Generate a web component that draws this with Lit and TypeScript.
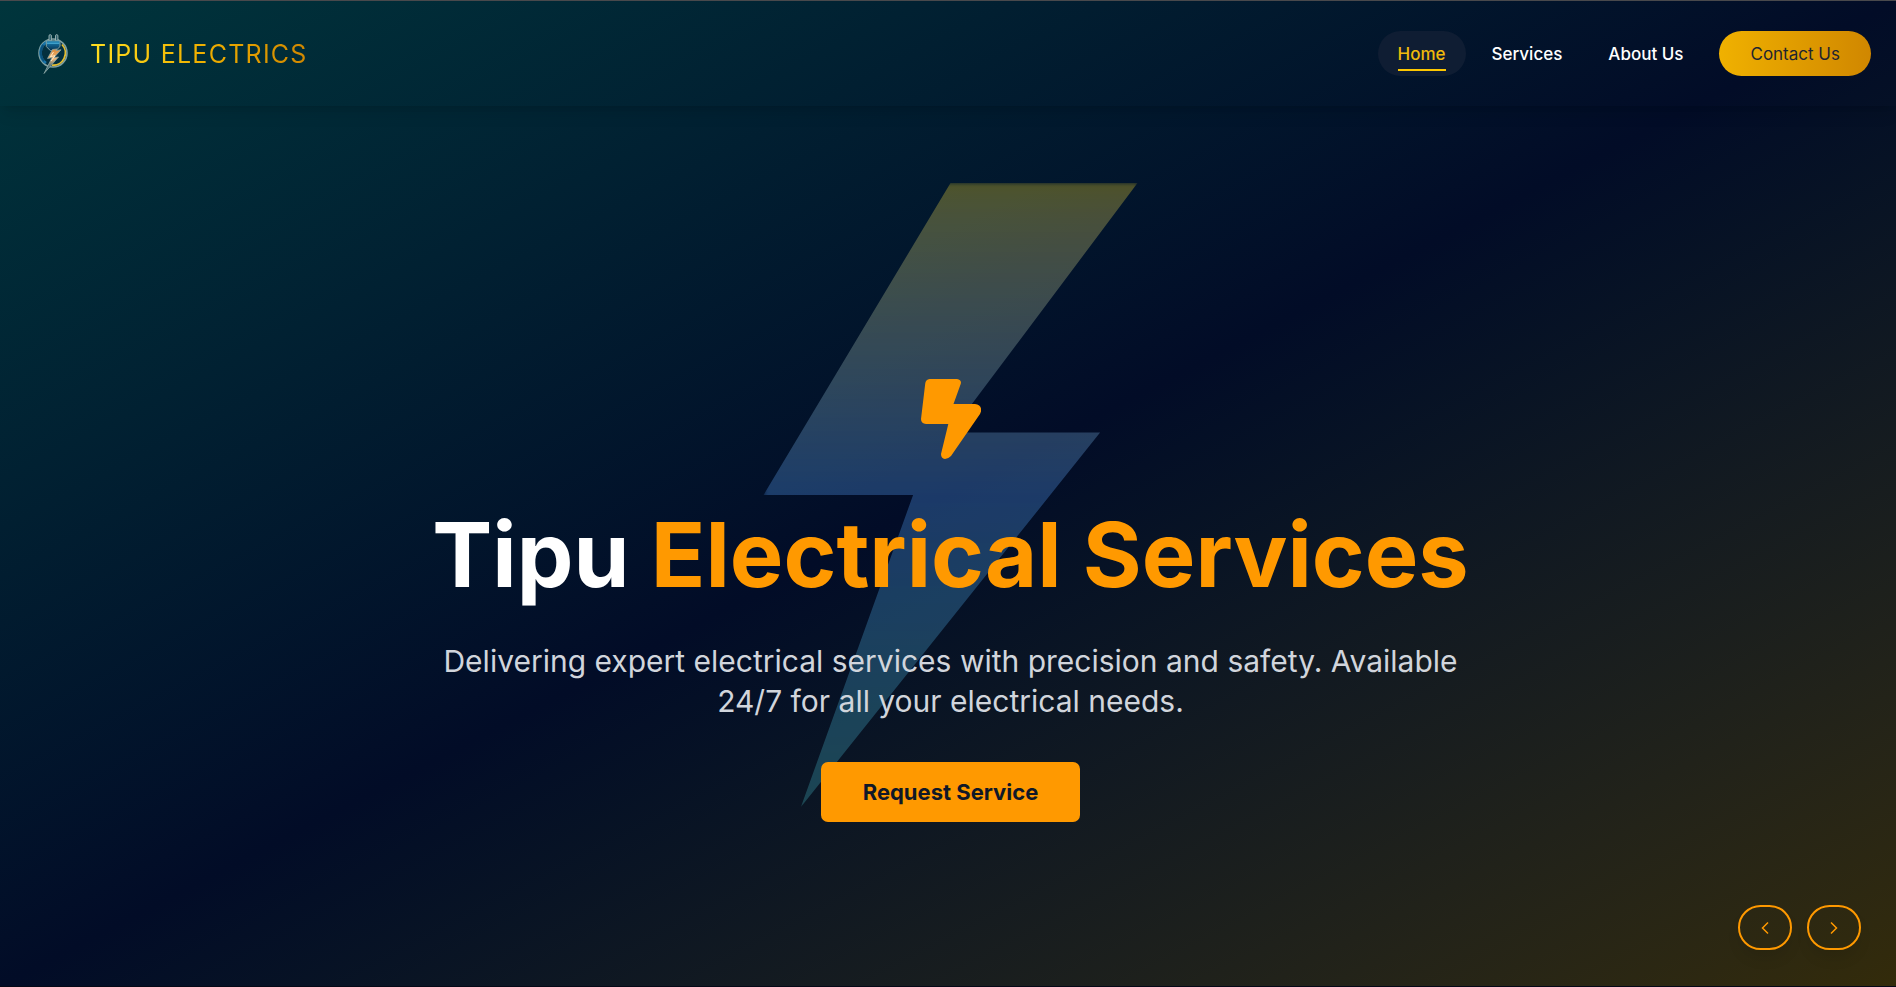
import { LitElement, html, css, svg } from "lit";
import { customElement, state } from "lit/decorators.js";

const links = ["Home", "Services", "About Us"];

const logo = svg`
  <svg class="logo" viewBox="0 0 32 40" aria-hidden="true">
    <defs>
      <linearGradient id="plug" x1="0" y1="0" x2="0" y2="1">
        <stop offset="0" stop-color="#1681b8" /><stop offset="1" stop-color="#082f4c" />
      </linearGradient>
      <linearGradient id="spark" x1="0" y1="0" x2="0" y2="1">
        <stop offset="0" stop-color="#d98a3a" /><stop offset=".4" stop-color="#f3b877" /><stop offset=".7" stop-color="#4c7076" />
      </linearGradient>
    </defs>
    <circle cx="16" cy="19" r="14" fill="#04303f" stroke="#7fa0a2" stroke-width="1.6" />
    <path d="M11 7.500A12.300 12.300 0 0 0 9 29" fill="none" stroke="#1673a8" stroke-width="2.600" />
    <path d="M6.500 11A12.300 12.300 0 0 0 7 27" fill="none" stroke="#0c5078" stroke-width="2" />
    <path d="M25 10.500A12.300 12.300 0 0 1 15 31.200" fill="none" stroke="#e3bd31" stroke-width="1.800" />
    <path d="M12 7V1.300q1.200-1.400 2.400 0V7zM18.500 7V1.300q1.200-1.400 2.400 0V7z" fill="#2b5f6c" stroke="#9fb7b5" stroke-width=".9" />
    <path d="M9.300 6.800H23v5.700l-4.200 4.200h-5.400l-4.100-4.200z" fill="url(#plug)" stroke="#7fa0a2" stroke-width="1" />
    <path d="M10 9.200h12.300" stroke="#55b9de" stroke-width="1" />
    <path d="M15.500 15.500L10.500 24.500l4.500-.8L7 39.500 21.500 23l-4.500 .6 7-7.800-5 .7 1-1.500z" fill="url(#spark)" stroke="#8ca7a6" stroke-width=".8" />
    <path d="M16.500 18l-3 4.500 4.500-.8L14 27" fill="none" stroke="#fff0d5" stroke-width=".9" />
  </svg>`;

@customElement("app-root")
export class AppRoot extends LitElement {
  @state() private active = "Home";

  static styles = css`
    :host {
      display: block;
      font-family: Inter, sans-serif;
      color: #fff;
    }
    * {
      box-sizing: border-box;
    }
    .page {
      display: flex;
      flex-direction: column;
      min-height: 100vh;
      border-top: 1px solid #4a4a4d;
      border-bottom: 1px solid #050817;
      background: linear-gradient(to bottom right in oklab, #00353c, #020c27 50%, #332b0a);
    }
    .header {
      display: flex;
      align-items: center;
      justify-content: space-between;
      padding: 30px 25px 30px 37px;
      box-shadow: 0 10px 15px -3px rgb(0 0 0 / 10%), 0 4px 6px -4px rgb(0 0 0 / 10%);
    }
    .brand {
      display: flex;
      align-items: center;
      gap: 21px;
      text-decoration: none;
    }
    .logo {
      width: 32px;
      height: 40px;
    }
    .name {
      font-size: 25px;
      line-height: 32px;
      letter-spacing: 0.05em;
      color: transparent;
      background: linear-gradient(to right, #ffdf20, #f0b100, #d08700);
      background-clip: text;
      -webkit-background-clip: text;
    }
    .nav {
      display: flex;
      align-items: center;
      gap: 6px;
    }
    .link {
      display: flex;
      height: 45px;
      padding: 8px 20px 0;
      border-radius: 23px;
      color: #fff;
      font-size: 17px;
      font-weight: 500;
      line-height: 30px;
      text-decoration: none;
    }
    .label {
      height: 32px;
      border-bottom: 2px solid transparent;
    }
    .link.active {
      background: #0f1d33;
      color: #f0b90b;
    }
    .active .label {
      border-color: #fdc700;
    }
    .contact {
      height: 45px;
      margin-left: 10px;
      padding: 0 31px;
      border: 0;
      border-radius: 23px;
      background: linear-gradient(to right, #f0b100, #d08700);
      color: #1e2430;
      font: 400 17px/24px Inter, sans-serif;
    }
    .hero {
      flex: 1;
      display: grid;
      grid-template: 1fr / 1fr;
      padding-left: 5px;
    }
    .bolt,
    .content,
    .arrows {
      grid-area: 1 / 1;
    }
    .bolt {
      justify-self: center;
      margin-top: 77px;
      width: 374px;
      height: 624px;
      clip-path: polygon(50% 0, 100% 0, 50% 40%, 90% 40%, 10% 100%, 40% 50%, 0 50%);
      background: linear-gradient(to bottom in oklab, #ffdf20, #58a4ff, #46b8c0);
      filter: blur(2px);
      opacity: 0.3;
    }
    .content {
      z-index: 1;
      display: flex;
      flex-direction: column;
      align-items: center;
      padding-top: 273px;
      text-align: center;
    }
    .flash {
      width: 60px;
      height: 80px;
      fill: #ff9900;
    }
    .title {
      margin: 41px 0 0;
      font-size: 90px;
      font-weight: 700;
      line-height: 110px;
    }
    .accent {
      color: #ff9900;
    }
    .text {
      max-width: 1036px;
      margin: 31px 0 0;
      color: #d1d5dc;
      font-size: 30px;
      line-height: 40px;
    }
    .request {
      height: 60px;
      margin-top: 41px;
      padding: 0 42px;
      border: 0;
      border-radius: 7px;
      background: #ff9900;
      color: #101828;
      font: 700 22px/30px Inter, sans-serif;
    }
    .arrows {
      z-index: 2;
      align-self: end;
      justify-self: end;
      display: flex;
      gap: 15px;
      padding: 0 35px 36px 0;
    }
    .arrow {
      display: grid;
      place-items: center;
      width: 54px;
      height: 45px;
      padding: 0;
      border: 2px solid #ff9900;
      border-radius: 23px;
      background: transparent;
      color: #ff9900;
      box-shadow: 0 10px 15px -3px rgb(0 0 0 / 10%);
    }
    .chevron {
      width: 8px;
      height: 14px;
      fill: none;
      stroke: currentColor;
      stroke-width: 1.5;
    }
  `;

  render() {
    return html`
      <div class="page">
        <header class="header">
          <a class="brand" href="#home">${logo}<span class="name">TIPU ELECTRICS</span></a>
          <nav class="nav" aria-label="Main">
            ${links.map(
              (name) => html`<a
                class="link ${name === this.active ? "active" : ""}"
                href="#${name.toLowerCase().replace(" ", "-")}"
                @click=${() => (this.active = name)}
                ><span class="label">${name}</span></a
              >`
            )}
            <button class="contact" type="button">Contact Us</button>
          </nav>
        </header>
        <main class="hero">
          <div class="bolt"></div>
          <section class="content">
            <svg class="flash" viewBox="0 0 60 80" aria-hidden="true">
              <path d="M8.500 0H36q5 1 3.700 5L32.500 25H54q7 1 6 7.500L59 35 30 77q-3 3-6 3-4-.5-4-5l7.300-30H5Q0 44.500 0 40L4.300 4Q5 .5 8.500 0z" />
            </svg>
            <h1 class="title">Tipu <span class="accent">Electrical Services</span></h1>
            <p class="text">
              Delivering expert electrical services with precision and safety. Available 24/7 for all your electrical
              needs.
            </p>
            <button class="request" type="button">Request Service</button>
          </section>
          <div class="arrows">
            <button class="arrow" type="button" aria-label="Previous">
              <svg class="chevron" viewBox="0 0 8 14"><path d="M7 1.500 1.500 7 7 12.500" /></svg>
            </button>
            <button class="arrow" type="button" aria-label="Next">
              <svg class="chevron" viewBox="0 0 8 14"><path d="M1 1.500 6.500 7 1 12.500" /></svg>
            </button>
          </div>
        </main>
      </div>
    `;
  }
}
